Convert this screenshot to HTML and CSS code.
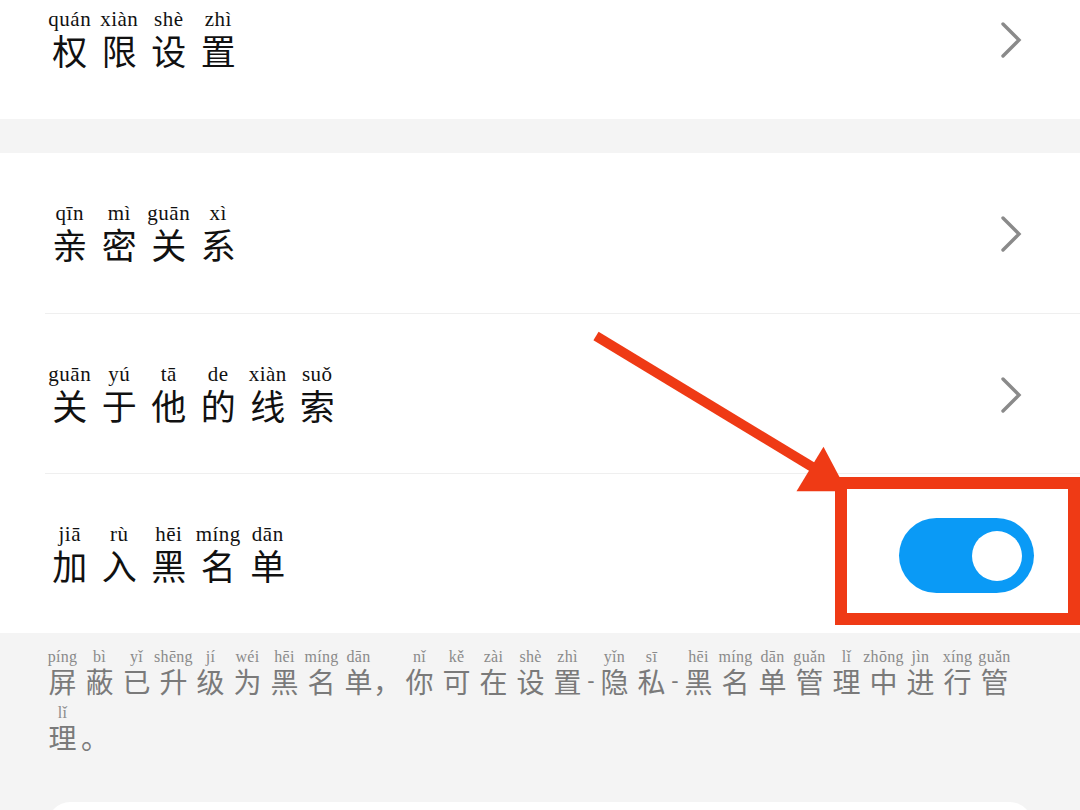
FILE: index.html
```html
<!DOCTYPE html>
<html lang="zh-CN">
<head>
<meta charset="utf-8">
<title>设置</title>
<link rel="stylesheet" href="styles.css">
</head>
<body>
<div class="page">
  <section class="group group-first">
    <div class="row">
      <div class="label">
        <span class="ch"><span class="py">quán</span><span class="hz">权</span></span>
        <span class="ch"><span class="py">xiàn</span><span class="hz">限</span></span>
        <span class="ch"><span class="py">shè</span><span class="hz">设</span></span>
        <span class="ch"><span class="py">zhì</span><span class="hz">置</span></span>
      </div>
      <svg class="chev" viewBox="0 0 22 38" width="22" height="38"><polyline points="3,3 19,19 3,35"/></svg>
    </div>
  </section>

  <section class="group">
    <div class="row">
      <div class="label">
        <span class="ch"><span class="py">qīn</span><span class="hz">亲</span></span>
        <span class="ch"><span class="py">mì</span><span class="hz">密</span></span>
        <span class="ch"><span class="py">guān</span><span class="hz">关</span></span>
        <span class="ch"><span class="py">xì</span><span class="hz">系</span></span>
      </div>
      <svg class="chev" viewBox="0 0 22 38" width="22" height="38"><polyline points="3,3 19,19 3,35"/></svg>
    </div>
    <div class="row">
      <div class="label">
        <span class="ch"><span class="py">guān</span><span class="hz">关</span></span>
        <span class="ch"><span class="py">yú</span><span class="hz">于</span></span>
        <span class="ch"><span class="py">tā</span><span class="hz">他</span></span>
        <span class="ch"><span class="py">de</span><span class="hz">的</span></span>
        <span class="ch"><span class="py">xiàn</span><span class="hz">线</span></span>
        <span class="ch"><span class="py">suǒ</span><span class="hz">索</span></span>
      </div>
      <svg class="chev" viewBox="0 0 22 38" width="22" height="38"><polyline points="3,3 19,19 3,35"/></svg>
    </div>
    <div class="row row-toggle">
      <div class="label">
        <span class="ch"><span class="py">jiā</span><span class="hz">加</span></span>
        <span class="ch"><span class="py">rù</span><span class="hz">入</span></span>
        <span class="ch"><span class="py">hēi</span><span class="hz">黑</span></span>
        <span class="ch"><span class="py">míng</span><span class="hz">名</span></span>
        <span class="ch"><span class="py">dān</span><span class="hz">单</span></span>
      </div>
      <div class="toggle"><span class="knob"></span></div>
    </div>
  </section>

  <div class="note">
    <div class="nline">
      <span class="nc"><span class="npy">píng</span><span class="nhz">屏</span></span>
      <span class="nc"><span class="npy">bì</span><span class="nhz">蔽</span></span>
      <span class="nc"><span class="npy">yǐ</span><span class="nhz">已</span></span>
      <span class="nc"><span class="npy">shēng</span><span class="nhz">升</span></span>
      <span class="nc"><span class="npy">jí</span><span class="nhz">级</span></span>
      <span class="nc"><span class="npy">wéi</span><span class="nhz">为</span></span>
      <span class="nc"><span class="npy">hēi</span><span class="nhz">黑</span></span>
      <span class="nc"><span class="npy">míng</span><span class="nhz">名</span></span>
      <span class="nc"><span class="npy">dān</span><span class="nhz">单</span></span>
      <span class="nc np-comma"><span class="npy"> </span><span class="nhz">，</span></span>
      <span class="nc"><span class="npy">nǐ</span><span class="nhz">你</span></span>
      <span class="nc"><span class="npy">kě</span><span class="nhz">可</span></span>
      <span class="nc"><span class="npy">zài</span><span class="nhz">在</span></span>
      <span class="nc"><span class="npy">shè</span><span class="nhz">设</span></span>
      <span class="nc"><span class="npy">zhì</span><span class="nhz">置</span></span>
      <span class="nc np-dash"><span class="npy"> </span><span class="nhz">-</span></span>
      <span class="nc"><span class="npy">yǐn</span><span class="nhz">隐</span></span>
      <span class="nc"><span class="npy">sī</span><span class="nhz">私</span></span>
      <span class="nc np-dash"><span class="npy"> </span><span class="nhz">-</span></span>
      <span class="nc"><span class="npy">hēi</span><span class="nhz">黑</span></span>
      <span class="nc"><span class="npy">míng</span><span class="nhz">名</span></span>
      <span class="nc"><span class="npy">dān</span><span class="nhz">单</span></span>
      <span class="nc"><span class="npy">guǎn</span><span class="nhz">管</span></span>
      <span class="nc"><span class="npy">lǐ</span><span class="nhz">理</span></span>
      <span class="nc"><span class="npy">zhōng</span><span class="nhz">中</span></span>
      <span class="nc"><span class="npy">jìn</span><span class="nhz">进</span></span>
      <span class="nc"><span class="npy">xíng</span><span class="nhz">行</span></span>
      <span class="nc"><span class="npy">guǎn</span><span class="nhz">管</span></span>
    </div>
    <div class="nline">
      <span class="nc"><span class="npy">lǐ</span><span class="nhz">理</span></span>
      <span class="nc np-period"><span class="npy"> </span><span class="nhz">。</span></span>
    </div>
  </div>

  <div class="card"></div>

  <svg class="arrow" viewBox="0 0 1080 810" width="1080" height="810">
    <line x1="596" y1="336" x2="814" y2="468"/>
    <polygon points="823.5,446.7 796.5,491.3 847,491.3"/>
  </svg>
  <div class="highlight"></div>
</div>
</body>
</html>
```

FILE: styles.css
```css
html, body {
  margin: 0;
  padding: 0;
}
body {
  background: #f4f4f4;
  width: 1080px;
  height: 810px;
  overflow: hidden;
}
.page {
  position: relative;
  width: 1080px;
  height: 810px;
  overflow: hidden;
  background: #f4f4f4;
  font-family: "Noto Sans CJK SC", sans-serif;
}

.group {
  background: #ffffff;
  margin-top: 34px;
}
.group-first {
  margin-top: -41px;
}

.row {
  box-sizing: border-box;
  height: 160px;
  margin-left: 45px;
  padding-right: 58px;
  display: flex;
  align-items: center;
  justify-content: space-between;
}
.row + .row {
  border-top: 1px solid #efefef;
}
.row-toggle {
  padding-right: 46px;
}

.label {
  display: flex;
  align-items: flex-start;
}
.ch {
  width: 49.5px;
  display: flex;
  flex-direction: column;
  align-items: center;
}
.py {
  font-family: "Liberation Serif", serif;
  font-size: 21px;
  line-height: 20px;
  margin-bottom: 2px;
  letter-spacing: 0.5px;
  color: #111111;
  white-space: nowrap;
}
.hz {
  font-family: "Noto Sans CJK SC", sans-serif;
  font-size: 35px;
  line-height: 38px;
  color: #111111;
}

.chev {
  display: block;
  margin-top: 2px;
}
.chev polyline {
  fill: none;
  stroke: #8a8a8a;
  stroke-width: 3.4;
  stroke-linecap: round;
  stroke-linejoin: miter;
}

.toggle {
  position: relative;
  width: 135px;
  height: 75px;
  border-radius: 38px;
  background: #0a9af6;
  margin-top: 4px;
}
.knob {
  position: absolute;
  right: 12px;
  top: 12.5px;
  width: 50px;
  height: 50px;
  border-radius: 50%;
  background: #ffffff;
}

.note {
  padding: 15px 48px 0 44px;
}
.nline {
  display: flex;
  align-items: flex-start;
  height: 56px;
}
.nc {
  width: 37px;
  display: flex;
  flex-direction: column;
  align-items: center;
}
.npy {
  font-family: "Liberation Serif", serif;
  font-size: 16px;
  line-height: 18px;
  height: 18px;
  color: #8a8a8a;
  white-space: pre;
  letter-spacing: 0.3px;
}
.nhz {
  font-family: "Noto Sans CJK SC", sans-serif;
  font-size: 28px;
  line-height: 30px;
  color: #7a7a7a;
}
.np-comma {
  width: 24px;
  align-items: flex-start;
}
.np-comma .nhz {
  margin-left: -4px;
}
.np-dash {
  width: 10px;
}
.np-dash .nhz {
  font-family: "Liberation Sans", sans-serif;
  font-size: 22px;
}
.np-period {
  align-items: flex-start;
}

.card {
  margin: 42px 48px 0 48px;
  height: 60px;
  background: #ffffff;
  border-radius: 22px 22px 0 0;
}

.arrow {
  position: absolute;
  left: 0;
  top: 0;
  pointer-events: none;
}
.arrow line {
  stroke: #ef3a15;
  stroke-width: 10;
}
.arrow polygon {
  fill: #ef3a15;
}
.highlight {
  position: absolute;
  left: 835px;
  top: 477px;
  width: 245px;
  height: 148px;
  box-sizing: border-box;
  border: 12px solid #ef3a15;
  pointer-events: none;
}
```
